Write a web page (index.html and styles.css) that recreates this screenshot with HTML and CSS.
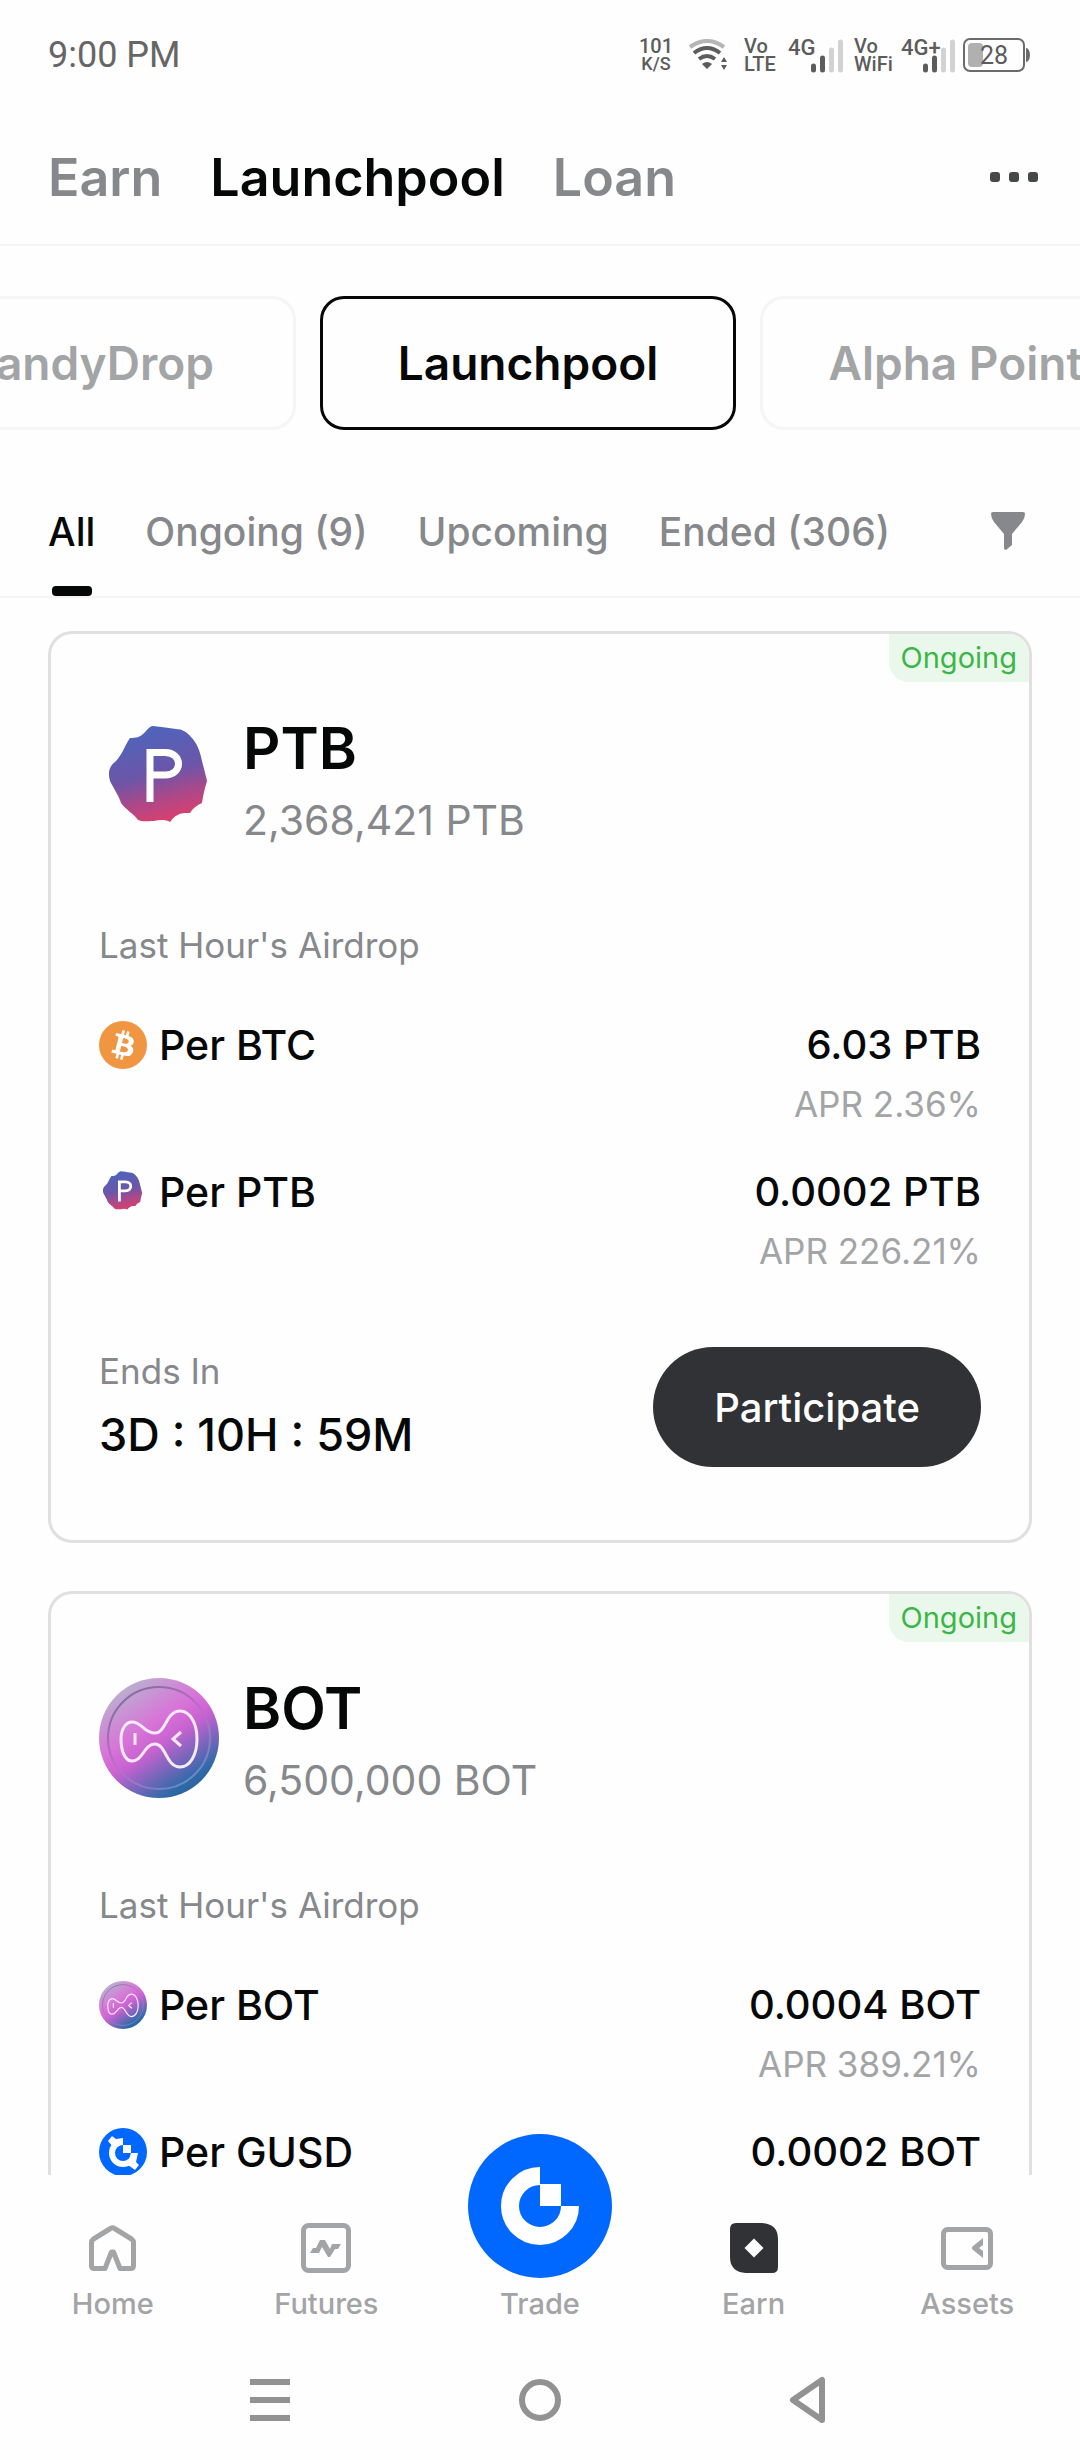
FILE: index.html
```html
<!DOCTYPE html>
<html lang="en">
<head>
<meta charset="utf-8">
<meta name="viewport" content="width=device-width, initial-scale=1">
<title>Launchpool</title>
<link rel="stylesheet" href="styles.css">
</head>
<body>
<svg class="sprite" aria-hidden="true">
  <defs>
    <linearGradient id="ptb-fill" x1="0.35" y1="0" x2="0.6" y2="1">
      <stop offset="0" stop-color="#4b66bd"/>
      <stop offset="0.5" stop-color="#6c55a8"/>
      <stop offset="0.75" stop-color="#ac4889"/>
      <stop offset="1" stop-color="#dc3f6c"/>
    </linearGradient>
    <linearGradient id="bot-fill" x1="0.2" y1="0.05" x2="0.8" y2="0.95">
      <stop offset="0" stop-color="#b9b3cf"/>
      <stop offset="0.38" stop-color="#d873d8"/>
      <stop offset="0.55" stop-color="#c862d0"/>
      <stop offset="0.9" stop-color="#2e6aa8"/>
      <stop offset="1" stop-color="#2b5f9c"/>
    </linearGradient>
    <linearGradient id="bot-rim" x1="0.2" y1="0.05" x2="0.8" y2="0.95">
      <stop offset="0" stop-color="#7f6f9f"/>
      <stop offset="0.5" stop-color="#c468cc"/>
      <stop offset="1" stop-color="#5f8cc4"/>
    </linearGradient>
    <symbol id="ptb" viewBox="0 0 120 120">
      <path d="M54 8C63 9 70 10 77 11C83 11 88 14 92 19C98 25 101 33 103 43C105 51 107 58 108 63C105 72 104 79 103 85C98 87 94 90 91 95C87 95 81 95 79 97C75 98 73 102 71 104C66 101 60 102 55 103C48 103 43 104 39 102C35 96 27 92 22 85C20 78 15 71 11 63C8 52 12 47 17 43C23 37 26 27 31 20C37 20 41 19 44 16C47 14 50 8 54 8Z" fill="url(#ptb-fill)"/>
      <path d="M51 84V34.500H66C84 34.500 84 57 66 57H51" fill="none" stroke="#fff" stroke-width="7"/>
    </symbol>
    <symbol id="bot" viewBox="0 0 120 120">
      <circle cx="60" cy="60" r="60" fill="url(#bot-fill)"/>
      <circle cx="60" cy="60" r="51" fill="none" stroke="url(#bot-rim)" stroke-width="2"/>
      <path d="M33 44C43 44 45 55 56 55C67 55 67 33 81 33C92 33 98 47 98 61C98 77 91 89 81 89C67 89 67 66 56 66C45 66 44 83 33 83C26 83 22 73 22 61C22 51 27 44 33 44Z" fill="none" stroke="#f8e8fb" stroke-width="3"/>
      <path d="M36 55v12M82 54l-8 7 8 7" fill="none" stroke="#f8e8fb" stroke-width="3"/>
    </symbol>
    <symbol id="btc" viewBox="0 0 32 32">
      <circle cx="16" cy="16" r="16" fill="#f09642"/>
      <path fill="#fff" d="M23.189 14.02c.314-2.096-1.283-3.223-3.465-3.975l.708-2.84-1.728-.43-.69 2.765c-.454-.114-.92-.22-1.385-.326l.695-2.783L15.596 6l-.708 2.839c-.376-.086-.746-.17-1.104-.26l.002-.009-2.384-.595-.46 1.846s1.283.294 1.256.312c.7.175.826.638.805 1.006l-.806 3.235c.048.012.11.03.18.057l-.183-.045-1.13 4.532c-.086.212-.303.531-.793.41.018.025-1.256-.313-1.256-.313l-.858 1.978 2.25.561c.418.105.828.215 1.231.318l-.715 2.872 1.727.43.708-2.84c.472.127.93.245 1.378.357l-.706 2.828 1.728.43.715-2.866c2.948.558 5.164.333 6.097-2.333.752-2.146-.037-3.385-1.588-4.192 1.13-.26 1.98-1.003 2.207-2.538zm-3.95 5.538c-.533 2.147-4.148.986-5.32.695l.95-3.805c1.172.293 4.929.872 4.37 3.11zm.535-5.569c-.487 1.953-3.495.96-4.47.717l.86-3.45c.975.243 4.118.696 3.61 2.733z"/>
    </symbol>
    <symbol id="gusd" viewBox="0 0 48 48">
      <circle cx="24" cy="24" r="24" fill="#0068ff"/>
      <path d="M24 14A11 11 0 1 0 35 25" fill="none" stroke="#fff" stroke-width="6"/>
      <path d="M24 17h8v8h-8zM9 13l4-5 4 3 7-1v6l-9 4zM32 25h7l-2 9 3 3-4 5-7-5z" fill="#fff"/>
    </symbol>
  </defs>
</svg>

<div class="status">
  <span class="time">9:00 PM</span>
  <div class="indicators">
    <span class="stack speed"><span>101</span><span class="unit">K/S</span></span>
    <svg class="wifi" width="40" height="32" viewBox="0 0 40 32" aria-hidden="true">
      <path d="M2 8Q19 -4 36 8" fill="none" stroke="#b5b5b5" stroke-width="4"/>
      <path d="M6 14Q19 4 32 14M11 20Q19 14 27 20" fill="none" stroke="#5c5c5c" stroke-width="4"/>
      <path d="M14 25Q19 21 24 25L19 30ZM36 18l3 5h-6zM36 31l3-5h-6z" fill="#5c5c5c"/>
    </svg>
    <span class="stack lte"><span>Vo</span><span>LTE</span></span>
    <svg class="signal" width="58" height="34" viewBox="0 0 58 34" aria-label="4G signal">
      <text class="net" x="2" y="17">4G</text>
      <path d="M27.500 28v4M36.500 20v12" stroke="#5c5c5c" stroke-width="5" stroke-linecap="round"/>
      <path d="M45.500 12v20M54.500 4v28" stroke="#d2d2d2" stroke-width="5" stroke-linecap="round"/>
    </svg>
    <span class="stack vowifi"><span>Vo</span><span>WiFi</span></span>
    <svg class="signal" width="58" height="34" viewBox="0 0 58 34" aria-label="4G+ signal">
      <path d="M45.500 12v20M54.500 4v28" stroke="#d2d2d2" stroke-width="5" stroke-linecap="round"/>
      <path d="M27.500 28v4M36.500 20v12" stroke="#5c5c5c" stroke-width="5" stroke-linecap="round"/>
      <text class="net" x="3" y="17">4G+</text>
    </svg>
    <svg class="battery" width="70" height="34" viewBox="0 0 70 34" aria-label="Battery 28%">
      <rect x="2" y="1" width="60" height="32" rx="6" fill="none" stroke="#6b6b6b" stroke-width="2"/>
      <rect x="6" y="5" width="15" height="24" rx="4" fill="#b0b0b0"/>
      <path d="M64 10a4 7 0 0 1 4 7a4 7 0 0 1 -4 7z" fill="#6b6b6b"/>
      <text class="level" x="18" y="26">28</text>
    </svg>
  </div>
</div>

<header class="header">
  <nav class="sections">
    <a href="#">Earn</a>
    <a href="#" class="current">Launchpool</a>
    <a href="#">Loan</a>
  </nav>
  <button class="more" aria-label="More">
    <svg width="48" height="10" viewBox="0 0 48 10"><path d="M3 0h4q3 0 3 3v4q0 3-3 3h-4q-3 0-3-3v-4q0-3 3-3zM22 0h4q3 0 3 3v4q0 3-3 3h-4q-3 0-3-3v-4q0-3 3-3zM41 0h4q3 0 3 3v4q0 3-3 3h-4q-3 0-3-3v-4q0-3 3-3z" fill="#45474a"/></svg>
  </button>
</header>

<div class="pills">
  <button class="pill">CandyDrop</button>
  <button class="pill active">Launchpool</button>
  <button class="pill">Alpha Points</button>
</div>

<div class="filters">
  <nav class="tabs">
    <a href="#" class="tab selected">All</a>
    <a href="#" class="tab">Ongoing (9)</a>
    <a href="#" class="tab">Upcoming</a>
    <a href="#" class="tab">Ended (306)</a>
  </nav>
  <button class="funnel" aria-label="Filter">
    <svg width="34" height="38" viewBox="0 0 34 38"><path d="M2 0h30q2 0 2 2q0 4-3 8L21 22v11l-6 5q-2 0-2-2V22L3 10Q0 6 0 2Q0 0 2 0z" fill="#86888b"/></svg>
  </button>
</div>

<main class="list">
  <article class="card">
    <span class="badge">Ongoing</span>
    <div class="coin">
      <svg class="logo" aria-hidden="true"><use href="#ptb"/></svg>
      <div>
        <h2 class="name">PTB</h2>
        <p class="supply">2,368,421 PTB</p>
      </div>
    </div>
    <p class="caption">Last Hour's Airdrop</p>
    <ul class="rates">
      <li class="rate">
        <span class="asset"><svg class="token" aria-hidden="true"><use href="#btc"/></svg>Per BTC</span>
        <span class="yield"><span>6.03 PTB</span><span class="apr">APR 2.36%</span></span>
      </li>
      <li class="rate">
        <span class="asset"><svg class="token" aria-hidden="true"><use href="#ptb"/></svg>Per PTB</span>
        <span class="yield"><span>0.0002 PTB</span><span class="apr">APR 226.21%</span></span>
      </li>
    </ul>
    <div class="footer">
      <div class="ends">
        <span class="ends-label">Ends In</span>
        <span class="countdown">3D : 10H : 59M</span>
      </div>
      <button class="join">Participate</button>
    </div>
  </article>

  <article class="card">
    <span class="badge">Ongoing</span>
    <div class="coin">
      <svg class="logo" aria-hidden="true"><use href="#bot"/></svg>
      <div>
        <h2 class="name">BOT</h2>
        <p class="supply">6,500,000 BOT</p>
      </div>
    </div>
    <p class="caption">Last Hour's Airdrop</p>
    <ul class="rates">
      <li class="rate">
        <span class="asset"><svg class="token" aria-hidden="true"><use href="#bot"/></svg>Per BOT</span>
        <span class="yield"><span>0.0004 BOT</span><span class="apr">APR 389.21%</span></span>
      </li>
      <li class="rate">
        <span class="asset"><svg class="token" aria-hidden="true"><use href="#gusd"/></svg>Per GUSD</span>
        <span class="yield"><span>0.0002 BOT</span></span>
      </li>
    </ul>
  </article>
</main>

<nav class="bottom">
  <a href="#" class="item">
    <svg class="glyph" viewBox="0 0 52 52" aria-hidden="true"><path d="M18 46.500H7.500Q4.500 46.500 4.500 43.500V20.500Q4.500 18.500 6.500 17L23.500 6.500Q25.500 5 27.500 6.500L44.500 17Q46.500 18.500 46.500 20.500V43.500Q46.500 46.500 43.500 46.500H33L26.500 30h-2z" fill="none" stroke="#a2a4a6" stroke-width="5" stroke-linejoin="round"/></svg>
    <span>Home</span>
  </a>
  <a href="#" class="item">
    <svg class="glyph" viewBox="0 0 52 52" aria-hidden="true"><rect x="3.500" y="3.500" width="45" height="45" rx="5" fill="none" stroke="#a2a4a6" stroke-width="5"/><path d="M10 31L13 26H16L20 18H25L30 27L32 22H41L38 27H35L30 35H28L22 25L19 31Z" fill="#a2a4a6"/></svg>
    <span>Futures</span>
  </a>
  <a href="#" class="item">
    <span class="glyph"></span>
    <svg class="trade" viewBox="0 0 144 144" aria-hidden="true"><circle cx="72" cy="72" r="72" fill="#0068ff"/><path d="M72 42A30 30 0 1 0 102 72" fill="none" stroke="#fff" stroke-width="18"/><path d="M72 50h21v22h-21z" fill="#fff"/></svg>
    <span>Trade</span>
  </a>
  <a href="#" class="item">
    <svg class="glyph" viewBox="0 0 52 52" aria-hidden="true"><path d="M8 1H34Q50 2 50 17V45Q50 51 44 51H18Q2 50 2 35V7Q2 1 8 1z" fill="#303236"/><path d="M26 16.500L35.500 26L26 35.500L16.500 26z" fill="#fff"/></svg>
    <span>Earn</span>
  </a>
  <a href="#" class="item">
    <svg class="glyph" viewBox="0 0 52 52" aria-hidden="true"><rect x="2.500" y="7.500" width="47" height="38" rx="4" fill="none" stroke="#a2a4a6" stroke-width="5"/><path d="M42 16v7l-4 3 4 3v7l-10-8q-2-2 0-4z" fill="#a2a4a6"/></svg>
    <span>Assets</span>
  </a>
</nav>

<div class="system">
  <button aria-label="Recent apps"><svg width="48" height="48" viewBox="0 0 48 48"><path d="M4 6h40M4 24h40M4 42h40" stroke="#929292" stroke-width="6"/></svg></button>
  <button aria-label="Home screen"><svg width="48" height="48" viewBox="0 0 48 48"><circle cx="24" cy="24" r="18" fill="none" stroke="#929292" stroke-width="6"/></svg></button>
  <button aria-label="Back"><svg width="48" height="48" viewBox="0 0 48 48"><path d="M36 4V44L7 24Z" fill="none" stroke="#929292" stroke-width="6" stroke-linejoin="round"/></svg></button>
</div>
</body>
</html>
```
FILE: styles.css
```css
:root {
  --ink: #060808;
  --muted: #86888b;
  --faint: #a2a4a6;
  --line: #e0e0e0;
  --hairline: #f5f5f5;
  --page: #fefefe;
}

* {
  box-sizing: border-box;
}

body {
  margin: 0;
  height: 100vh;
  display: flex;
  flex-direction: column;
  overflow: hidden;
  background: var(--page);
  color: var(--ink);
  font-family: Inter, "Liberation Sans", sans-serif;
}

h2,
p,
ul {
  margin: 0;
  padding: 0;
  list-style: none;
}

a {
  color: inherit;
  text-decoration: none;
}

button {
  margin: 0;
  padding: 0;
  border: 0;
  background: none;
  color: inherit;
  font: inherit;
}

svg {
  display: block;
}

.sprite {
  position: absolute;
  width: 0;
  height: 0;
}

/* Status bar */
.status {
  flex: none;
  display: flex;
  align-items: center;
  justify-content: space-between;
  height: 110px;
  padding: 0 48px;
  color: #666;
  font-family: Roboto, sans-serif;
}

.time {
  font-size: 36px;
}

.indicators {
  display: flex;
  align-items: center;
  font-weight: 500;
  color: #5c5c5c;
}

.stack {
  display: flex;
  flex-direction: column;
  font-size: 20px;
  line-height: 18px;
}

.speed {
  align-items: center;
  width: 32px;
  margin-right: 16px;
}

.unit {
  font-size: 18px;
}

.wifi {
  margin-right: 16px;
}

.lte {
  width: 42px;
}

.signal {
  margin-right: 10px;
  overflow: visible;
}

.vowifi {
  width: 44px;
}

.battery {
  margin-left: -4px;
}

.net {
  font-size: 22px;
  fill: #5c5c5c;
}

.level {
  font-size: 25px;
  font-weight: 400;
  fill: #5c5c5c;
}

/* Section switcher */
.header {
  flex: none;
  display: flex;
  align-items: center;
  justify-content: space-between;
  height: 136px;
  padding: 0 42px 0 48px;
  border-bottom: 2px solid var(--hairline);
}

.sections {
  display: flex;
  gap: 48px;
  font-size: 52px;
  font-weight: 600;
  color: var(--muted);
}

.current {
  color: var(--ink);
}

/* Product pills, scrolled so the active one is in the middle */
.pills {
  flex: none;
  display: flex;
  gap: 24px;
  margin-left: -120px;
  padding-top: 50px;
  overflow: hidden;
}

.pill {
  flex: none;
  width: 416px;
  height: 134px;
  border: 3px solid var(--hairline);
  border-radius: 24px;
  font-size: 46px;
  font-weight: 600;
  color: var(--faint);
}

.pill.active {
  border-color: var(--ink);
  color: var(--ink);
}

/* Status filter tabs */
.filters {
  flex: none;
  display: flex;
  align-items: center;
  justify-content: space-between;
  height: 132px;
  margin-top: 36px;
  padding: 0 55px 0 48px;
  border-bottom: 2px solid var(--hairline);
}

.tabs {
  display: flex;
  gap: 50px;
  align-self: stretch;
  font-size: 39px;
  font-weight: 500;
  color: var(--muted);
}

.tab {
  display: flex;
  align-items: center;
}

.selected {
  position: relative;
  color: var(--ink);
}

.selected::after {
  content: "";
  position: absolute;
  bottom: 0;
  left: 50%;
  width: 40px;
  height: 10px;
  margin-left: -20px;
  border-radius: 4px;
  background: var(--ink);
}

/* Pool cards */
.list {
  flex: 1;
  min-height: 0;
  overflow: hidden;
  display: flex;
  flex-direction: column;
  gap: 48px;
  padding: 33px 48px 0;
}

.card {
  flex: none;
  position: relative;
  padding: 84px 48px 73px;
  border: 3px solid var(--line);
  border-radius: 24px;
}

.badge {
  position: absolute;
  top: 0;
  right: 0;
  padding: 0 12px;
  border-radius: 0 20px 0 20px;
  background: #eaf8eb;
  color: #3cb648;
  font-size: 29px;
  line-height: 48px;
}

.coin {
  display: flex;
  gap: 24px;
}

.logo {
  width: 120px;
  height: 120px;
}

.name {
  font-size: 58px;
  line-height: 60px;
  font-weight: 600;
}

.supply {
  margin-top: 18px;
  font-size: 41px;
  line-height: 48px;
  color: var(--muted);
}

.caption {
  margin-top: 77px;
  font-size: 35px;
  line-height: 48px;
  color: var(--muted);
}

.rates {
  display: flex;
  flex-direction: column;
  gap: 40px;
  margin-top: 52px;
}

.rate {
  display: flex;
  justify-content: space-between;
  align-items: flex-start;
  font-size: 40px;
  line-height: 48px;
  font-weight: 500;
}

.asset {
  display: flex;
  gap: 12px;
  font-size: 41px;
}

.token {
  width: 48px;
  height: 48px;
}

.yield {
  display: flex;
  flex-direction: column;
  align-items: flex-end;
  gap: 11px;
}

.apr {
  font-size: 35px;
  font-weight: 400;
  color: var(--faint);
}

.footer {
  display: flex;
  align-items: flex-start;
  justify-content: space-between;
  margin-top: 72px;
}

.ends {
  display: flex;
  flex-direction: column;
  gap: 16px;
  line-height: 48px;
}

.ends-label {
  font-size: 35px;
  color: var(--muted);
}

.countdown {
  font-size: 45px;
  font-weight: 500;
}

.join {
  height: 120px;
  padding: 0 61px;
  border-radius: 60px;
  background: #303236;
  color: #fff;
  font-size: 40px;
  font-weight: 500;
}

/* App navigation */
.bottom {
  flex: none;
  display: grid;
  grid-template-columns: repeat(5, 1fr);
  padding: 47px 6px 18px;
  background: var(--page);
  color: var(--faint);
  font-size: 29px;
  line-height: 36px;
  font-weight: 500;
}

.item {
  position: relative;
  display: flex;
  flex-direction: column;
  align-items: center;
  gap: 12px;
}

.glyph {
  width: 52px;
  height: 52px;
}

.trade {
  position: absolute;
  bottom: 44px;
  width: 144px;
  height: 144px;
}

/* Android navigation */
.system {
  flex: none;
  display: flex;
  height: 120px;
  padding: 0 12.5%;
}

.system button {
  flex: 1;
  display: flex;
  align-items: center;
  justify-content: center;
}
```
